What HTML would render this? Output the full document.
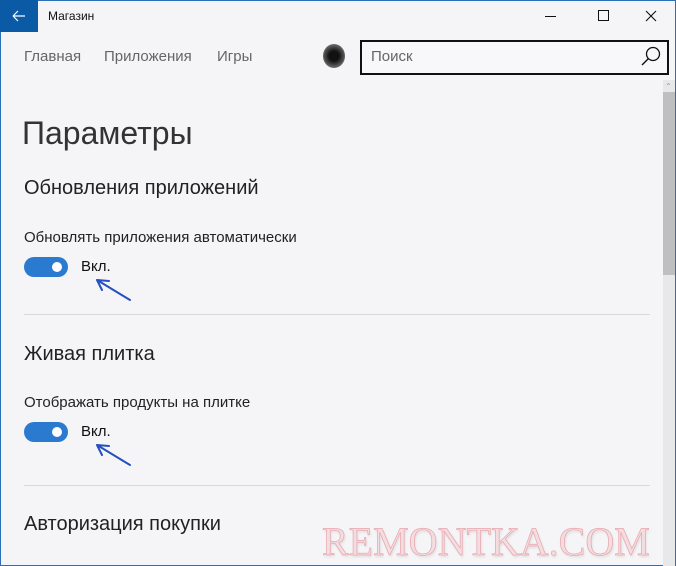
<!DOCTYPE html>
<html><head><meta charset="utf-8"><style>
*{margin:0;padding:0;box-sizing:border-box}
body{width:676px;height:566px;overflow:hidden;background:#f5f4f7;font-family:"Liberation Sans",sans-serif;color:#222;position:relative}
.a{position:absolute;white-space:nowrap}
.tog{position:absolute;width:44px;height:20px;border-radius:10px;background:#2a7bd0}
.tog::after{content:"";position:absolute;right:6px;top:5px;width:10px;height:10px;border-radius:50%;background:#fff}
.sep{position:absolute;left:24px;width:626px;height:1px;background:#d8d7da}
</style></head><body>
<div class="a" style="left:0;top:0;width:676px;height:566px;border:1px solid #2b6fb7;border-top:none"></div>
<div class="a" style="left:0;top:0;width:676px;height:1px;background:#2b6fb7"></div>
<div class="a" style="left:0;top:0;width:38px;height:32px;background:#0b5aa6"></div>
<svg class="a" style="left:11px;top:9px" width="16" height="14" viewBox="0 0 16 14"><path d="M2 7H14M2 7L7 2M2 7L7 12" stroke="#fff" stroke-width="1.2" fill="none"/></svg>
<div class="a" style="left:48px;top:9px;font-size:12px;color:#111">Магазин</div>
<div class="a" style="left:545px;top:16px;width:11px;height:1px;background:#111"></div>
<div class="a" style="left:598px;top:10px;width:11px;height:11px;border:1px solid #111"></div>
<svg class="a" style="left:645px;top:10px" width="12" height="12"><path d="M1 1L11 11M11 1L1 11" stroke="#111" stroke-width="1.1"/></svg>
<div class="a" style="left:24px;top:48px;font-size:15px;color:#666">Главная</div>
<div class="a" style="left:104px;top:48px;font-size:15px;color:#666">Приложения</div>
<div class="a" style="left:217px;top:48px;font-size:15px;color:#666">Игры</div>
<div class="a" style="left:323px;top:44px;width:22px;height:24px;border-radius:50%;background:radial-gradient(circle,#111 30%,#666 70%,#ccc)"></div>
<div class="a" style="left:360px;top:40px;width:309px;height:35px;border:2px solid #111;background:#f8f7f9"></div>
<div class="a" style="left:371px;top:48px;font-size:15px;color:#666">Поиск</div>
<svg class="a" style="left:640px;top:45px" width="22" height="22"><circle cx="13" cy="9" r="6.5" stroke="#111" stroke-width="1.3" fill="none"/><path d="M8.5 13.5L2 20" stroke="#111" stroke-width="1.4"/></svg>
<div class="a" style="left:663px;top:80px;width:12px;height:486px;background:#e8e7ea"></div>
<div class="a" style="left:663px;top:92px;width:12px;height:183px;background:#bfbec1"></div>
<div class="a" style="left:665px;top:82px;font-size:8px;color:#999">⌃</div>
<div class="a" style="left:22px;top:115px;font-size:32px;color:#333">Параметры</div>
<div class="a" style="left:24px;top:177px;font-size:20px;color:#222">Обновления приложений</div>
<div class="a" style="left:24px;top:229px;font-size:15px;color:#222">Обновлять приложения автоматически</div>
<div class="tog" style="left:24px;top:257px"></div>
<div class="a" style="left:81px;top:258px;font-size:15px;color:#111">Вкл.</div>
<svg class="a" style="left:90px;top:272px" width="50" height="36"><path d="M40 28L7 8M7 8L19 9M7 8L12 18" stroke="#2450c0" stroke-width="2" fill="none" stroke-linecap="round"/></svg>
<div class="sep" style="top:314px"></div>
<div class="a" style="left:24px;top:343px;font-size:20px;color:#222">Живая плитка</div>
<div class="a" style="left:24px;top:394px;font-size:15px;color:#222">Отображать продукты на плитке</div>
<div class="tog" style="left:24px;top:422px"></div>
<div class="a" style="left:81px;top:423px;font-size:15px;color:#111">Вкл.</div>
<svg class="a" style="left:90px;top:437px" width="50" height="36"><path d="M40 28L7 8M7 8L19 9M7 8L12 18" stroke="#2450c0" stroke-width="2" fill="none" stroke-linecap="round"/></svg>
<div class="sep" style="top:485px"></div>
<div class="a" style="left:24px;top:513px;font-size:20px;color:#222">Авторизация покупки</div>
<div class="a" style="left:322px;top:518px;font-family:'Liberation Serif',serif;font-size:40px;color:#f3dde0;letter-spacing:0px;-webkit-text-stroke:0.7px #e8a6ad;text-shadow:1px 2px 2px #ddd">REMONTKA.COM</div>
</body></html>
